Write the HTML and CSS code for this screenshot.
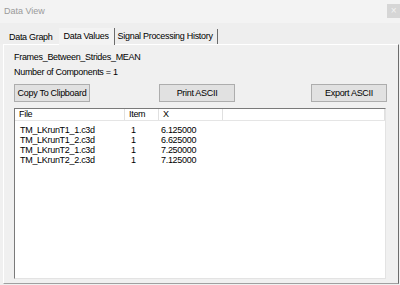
FILE: index.html
```html
<!DOCTYPE html>
<html lang="en">
<head>
    <meta charset="UTF-8">
    <meta name="viewport" content="width=device-width, initial-scale=1.0">
    <title>Data View</title>
    <link rel="stylesheet" href="styles.css">
</head>
<body>
    <div class="window">
        <!-- Title bar -->
        <div class="titlebar">
            <span class="title">Data View</span>
            <span class="close">&times;</span>
        </div>

        <!-- Tabs -->
        <div class="tabs">
            <div class="tab">Data Graph</div>
            <div class="tab active">Data Values</div>
            <div class="tab last">Signal Processing History</div>
        </div>

        <!-- Data Values page -->
        <div class="panel">
            <div class="label">Frames_Between_Strides_MEAN</div>
            <div class="label">Number of Components = 1</div>
            <div class="buttons">
                <button class="btn">Copy To Clipboard</button>
                <button class="btn btn-print">Print ASCII</button>
                <button class="btn btn-export">Export ASCII</button>
            </div>
            <div class="listview">
                <div class="list-header">
                    <div class="hcell">File</div>
                    <div class="hcell">Item</div>
                    <div class="hcell">X</div>
                    <div class="hcell"></div>
                </div>
                <div class="list-body">
                    <div class="row"><span>TM_LKrunT1_1.c3d</span><span>1</span><span>6.125000</span></div>
                    <div class="row"><span>TM_LKrunT1_2.c3d</span><span>1</span><span>6.625000</span></div>
                    <div class="row"><span>TM_LKrunT2_1.c3d</span><span>1</span><span>7.250000</span></div>
                    <div class="row"><span>TM_LKrunT2_2.c3d</span><span>1</span><span>7.125000</span></div>
                </div>
            </div>
        </div>
    </div>
</body>
</html>
```

FILE: styles.css
```css
body {
    margin: 0;
    background-color: #f0f0f0;
    font-family: "Liberation Sans", Arial, sans-serif;
    font-size: 9px;
    letter-spacing: -0.3px;
    color: #000;
}
.window {
    width: 400px;
    height: 285px;
    overflow: hidden;
}
.titlebar {
    height: 23px;
    display: flex;
    align-items: center;
    justify-content: space-between;
    background-color: #f3f3f3;
}
.title {
    margin-left: 4px;
    color: #9a9a9a;
    letter-spacing: 0;
    margin-top: -1px;
}
.close {
    width: 13px;
    height: 14px;
    margin-top: -2px;
    background-color: #d6d6d6;
    color: #f4f4f4;
    font-size: 10px;
    line-height: 14px;
    text-align: center;
}
.tabs {
    height: 21px;
    display: flex;
    align-items: flex-end;
    padding-left: 4px;
    background-color: #eeeeee;
}
.tab {
    height: 13px;
    line-height: 13px;
    padding: 0 5px;
    border-right: 1px solid transparent;
}
.tab.active {
    height: 17px;
    line-height: 16px;
    background-color: #f3f3f3;
    border-right: 1px solid #6c6c6c;
    margin-bottom: -1px;
    position: relative;
}
.tab.last {
    padding: 0 4px 0 3px;
    border-right: 1px solid #6c6c6c;
    height: 15px;
    line-height: 15px;
}
.panel {
    margin-left: 3px;
    width: 380px;
    height: 233px;
    padding: 5px 4px 0 10px;
    border-left: 1px solid #ffffff;
    border-top: 1px solid #ffffff;
    border-right: 1px solid #6c6c6c;
    border-bottom: 1px solid #a0a0a0;
    background-color: #f0f0f0;
}
.label {
    line-height: 15px;
}
.buttons {
    display: flex;
    margin-top: 4px;
}
.btn {
    width: 76px;
    height: 18px;
    padding: 0;
    background-color: #e1e1e1;
    border: 1px solid #adadad;
    font-family: inherit;
    font-size: 9px;
    letter-spacing: -0.3px;
    color: #000;
}
.btn-print {
    margin-left: 69px;
}
.btn-export {
    margin-left: 76px;
}
.listview {
    margin-top: 6px;
    width: 370px;
    height: 169px;
    background-color: #ffffff;
    border-left: 1px solid #7a7a7a;
    border-top: 1px solid #7a7a7a;
    border-right: 1px solid #e3e3e3;
    border-bottom: 1px solid #e3e3e3;
}
.list-header {
    display: grid;
    grid-template-columns: 110px 34px 64px 1fr;
    height: 11px;
    border-bottom: 1px solid #e5e5e5;
}
.hcell {
    line-height: 11px;
    padding-left: 4px;
    border-right: 1px solid #e0e0e0;
}
.list-body {
    padding-top: 4px;
}
.row {
    display: grid;
    grid-template-columns: 110px 34px 64px;
    height: 10px;
    line-height: 10px;
}
.row span {
    padding-left: 5px;
}
.row span:nth-child(2) {
    padding-left: 6px;
}
.row span:nth-child(3) {
    padding-left: 2px;
}
```
